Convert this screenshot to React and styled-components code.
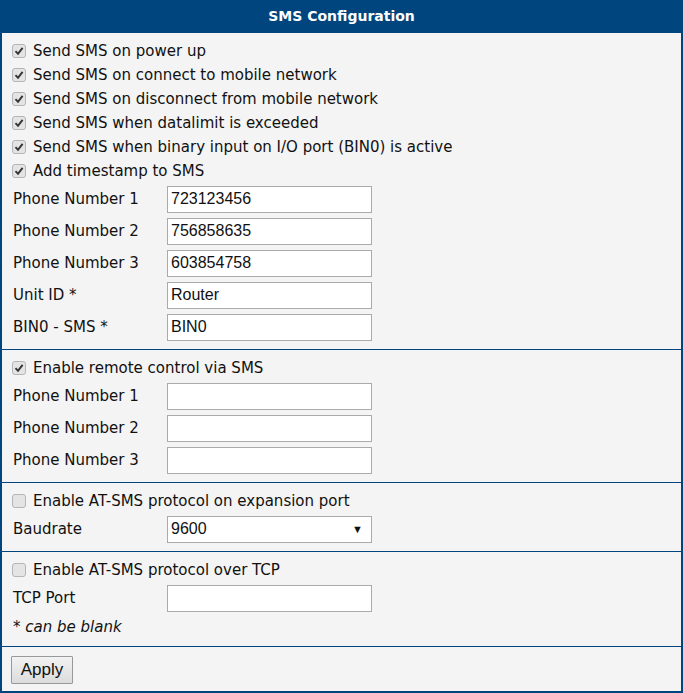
import React from "react";
import styled, { createGlobalStyle } from "styled-components";

const G = createGlobalStyle`
  body { margin: 0; background: #fff; font-family: "DejaVu Sans", Verdana, sans-serif; }
`;
const Panel = styled.div`
  width: 683px; height: 693px; box-sizing: border-box;
  border: 2px solid #00457e; border-top: 0; background: #f4f4f4;
  display: flex; flex-direction: column;
`;
const Header = styled.div`
  height: 33px; background: #00457e; color: #fff; font-weight: bold;
  font-size: 14px; display: flex; align-items: center; justify-content: center;
  margin: 0 -2px; border-bottom: 1px solid #00457e;
`;
const Section = styled.div`
  padding: 6px 0 6px 9px;
  border-bottom: ${p => (p.$last ? "0" : "1px solid #00457e")};
  display: flex; flex-direction: column;
`;
const CheckRow = styled.label`
  height: 24px; display: flex; align-items: center; gap: 7px;
  font-size: 15px; color: #111;
`;
const Box = styled.span`
  width: 12px; height: 12px; border: 1px solid #b5b5b5; border-radius: 3px;
  background: #e4e4e4; display: flex; align-items: center; justify-content: center;
  margin-left: 1px;
`;
const Row = styled.div`
  height: 32px; display: flex; align-items: center; font-size: 15px; color: #111;
`;
const Label = styled.span` width: 154px; padding-left: 2px; `;
const Input = styled.div`
  width: 205px; height: 27px; box-sizing: border-box; border: 1px solid #aaa;
  background: #fff; font-family: "Liberation Sans", Arial, sans-serif; font-size: 16px;
  padding: 0 3px; display: flex; align-items: center; justify-content: space-between;
`;
const Note = styled.div`
  height: 26px; display: flex; align-items: center; font-size: 15px; padding-left: 2px;
  font-style: italic; color: #111; span { font-style: normal; }
`;
const Button = styled.button`
  margin: 3px 0 1px; height: 28px; width: 62px; border: 1px solid #999; border-radius: 1px;
  background: linear-gradient(#f2f2f2, #dcdcdc); font-family: "Liberation Sans", Arial, sans-serif;
  font-size: 17px; color: #111; padding: 0;
`;

const Check = ({ on, children }) => (
  <CheckRow>
    <Box>
      {on && (
        <svg width="10" height="10" viewBox="0 0 10 10">
          <path d="M1.5 5.2 L4 7.8 L8.6 1.8" stroke="#333" strokeWidth="1.9" fill="none" />
        </svg>
      )}
    </Box>
    {children}
  </CheckRow>
);
const Field = ({ label, value, select }) => (
  <Row>
    <Label>{label}</Label>
    <Input>
      <span>{value}</span>
      {select && <span style={{ fontSize: 11, marginRight: 5 }}>▼</span>}
    </Input>
  </Row>
);

export default function App() {
  return (
    <Panel>
      <G />
      <Header>SMS Configuration</Header>
      <Section>
        <Check on>Send SMS on power up</Check>
        <Check on>Send SMS on connect to mobile network</Check>
        <Check on>Send SMS on disconnect from mobile network</Check>
        <Check on>Send SMS when datalimit is exceeded</Check>
        <Check on>Send SMS when binary input on I/O port (BIN0) is active</Check>
        <Check on>Add timestamp to SMS</Check>
        <Field label="Phone Number 1" value="723123456" />
        <Field label="Phone Number 2" value="756858635" />
        <Field label="Phone Number 3" value="603854758" />
        <Field label="Unit ID *" value="Router" />
        <Field label="BIN0 - SMS *" value="BIN0" />
      </Section>
      <Section>
        <Check on>Enable remote control via SMS</Check>
        <Field label="Phone Number 1" />
        <Field label="Phone Number 2" />
        <Field label="Phone Number 3" />
      </Section>
      <Section>
        <Check>Enable AT-SMS protocol on expansion port</Check>
        <Field label="Baudrate" value="9600" select />
      </Section>
      <Section>
        <Check>Enable AT-SMS protocol over TCP</Check>
        <Field label="TCP Port" />
        <Note><span>*</span>&nbsp;can be blank</Note>
      </Section>
      <Section $last>
        <div><Button>Apply</Button></div>
      </Section>
    </Panel>
  );
}
